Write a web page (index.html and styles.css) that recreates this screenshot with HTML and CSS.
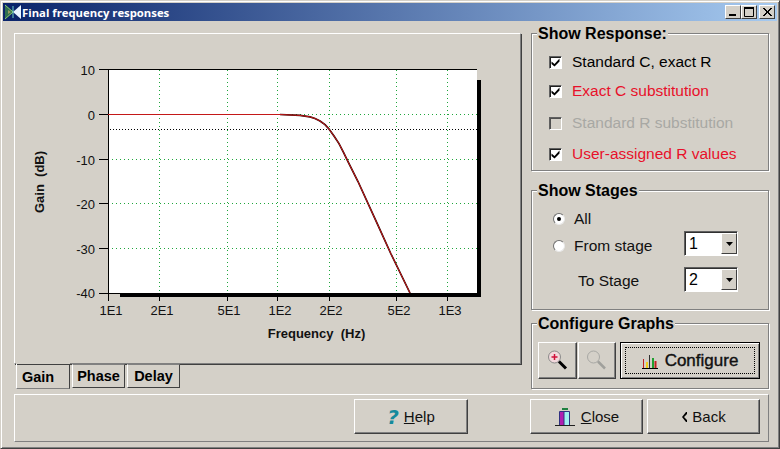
FILE: index.html
```html
<!DOCTYPE html>
<html lang="en">
<head>
<meta charset="utf-8">
<title>Final frequency responses</title>
<link rel="stylesheet" href="styles.css">
</head>
<body>
<div class="window">
  <header class="titlebar">
    <svg class="app-icon" width="18" height="16" viewBox="0 0 18 16">
      <rect width="18" height="16" fill="#0a246a"/>
      <path d="M1 1L9 8L1 15Z" fill="#2f6f4f"/>
      <path d="M17 1L9 8L17 15Z" fill="#e8f4ff"/>
      <path d="M1 1L9 8L1 15" fill="none" stroke="#8fd06a"/>
      <path d="M4 6L7 8L4 10Z" fill="#9a9a60"/>
      <path d="M9 2V14" stroke="#6fd0c8"/>
    </svg>
    <span class="title-text">Final frequency responses</span>
    <div class="caption-buttons">
      <span class="caption-btn"><svg width="14" height="12" viewBox="0 0 14 12"><rect x="3" y="8" width="7" height="2" fill="#000"/></svg></span>
      <span class="caption-btn"><svg width="14" height="12" viewBox="0 0 14 12"><path d="M3 2.500H11M2.500 2V10.500H11.500V2" fill="none" stroke="#000"/><rect x="2" y="1" width="10" height="2" fill="#000"/></svg></span>
      <span class="caption-btn caption-close"><svg width="14" height="12" viewBox="0 0 14 12"><path d="M3 2L11 10M4 2L12 10M11 2L3 10M12 2L4 10" stroke="#000" stroke-width="1"/></svg></span>
    </div>
  </header>

  <div class="client">
    <div class="upper">
      <section class="left-col">
        <div class="chart-panel">
          <svg class="chart" width="505" height="329" viewBox="15 34 505 329">
            <rect x="120" y="80" width="361" height="217" fill="#000"/>
            <rect x="108" y="70" width="369" height="223" fill="#fff"/>
            <g class="grid-green">
              <path d="M159.500 70V293M227.500 70V293M277.500 70V293M329.500 70V293M396.500 70V293M447.500 70V293"/>
              <path d="M108 114.500H477M108 159.500H477M108 203.500H477M108 248.500H477"/>
            </g>
            <path class="ref-line" d="M110 129.500H477"/>
            <path class="axis" d="M99 69.500H477M108.500 69.500V301M99 114.500H108M99 159.500H108M99 203.500H108M99 248.500H108M99 293.500H120M159.500 293V301M227.500 293V301M277.500 293V301M329.500 293V301M396.500 293V301M447.500 293V301"/>
            <path class="curve-dark" d="M280 114.500L300 115.400L310 116.900L315 118.500L320 121L325 124.600L329 129L334 136L339 143.600L343.500 152.300L348 161.700L358 181.500L377 223.200L391 254L410 293"/>
            <path class="curve-red" d="M108 114.500H280L300 115.400L310 116.900L315 118.500L320 121L325 124.600L329 129L334 136L339 143.600L343.500 152.300L348 161.700L358 181.500L377 223.200L391 254L410 293"/>
            <g class="tick-y">
              <text x="95" y="75">10</text>
              <text x="95" y="120">0</text>
              <text x="95" y="165">-10</text>
              <text x="95" y="209">-20</text>
              <text x="95" y="254">-30</text>
              <text x="95" y="298">-40</text>
            </g>
            <g class="tick-x">
              <text x="111" y="315">1E1</text>
              <text x="162" y="315">2E1</text>
              <text x="229" y="315">5E1</text>
              <text x="280" y="315">1E2</text>
              <text x="331" y="315">2E2</text>
              <text x="399" y="315">5E2</text>
              <text x="450" y="315">1E3</text>
            </g>
            <text class="axis-title" x="316.500" y="338" xml:space="preserve">Frequency  (Hz)</text>
            <text class="axis-title" transform="translate(44 182) rotate(-90)" xml:space="preserve">Gain  (dB)</text>
          </svg>
        </div>
        <nav class="tabs">
          <span class="tab tab-active">Gain</span>
          <span class="tab">Phase</span>
          <span class="tab">Delay</span>
        </nav>
      </section>

      <aside class="right-col">
        <div class="group group-response">
          <h2 class="group-title">Show Response:</h2>
          <div class="check-list">
            <div class="option"><span class="checkbox"><svg width="9" height="9" viewBox="0 0 9 9"><path d="M0.500 3.500L3.500 6L8.500 0.500V3.500L3.500 8.500L0.500 6Z" fill="#000"/></svg></span><span>Standard C, exact R</span></div>
            <div class="option text-red"><span class="checkbox"><svg width="9" height="9" viewBox="0 0 9 9"><path d="M0.500 3.500L3.500 6L8.500 0.500V3.500L3.500 8.500L0.500 6Z" fill="#000"/></svg></span><span>Exact C substitution</span></div>
            <div class="option text-disabled"><span class="checkbox checkbox-disabled"></span><span>Standard R substitution</span></div>
            <div class="option text-red"><span class="checkbox"><svg width="9" height="9" viewBox="0 0 9 9"><path d="M0.500 3.500L3.500 6L8.500 0.500V3.500L3.500 8.500L0.500 6Z" fill="#000"/></svg></span><span>User-assigned R values</span></div>
          </div>
        </div>

        <div class="group group-stages">
          <h2 class="group-title">Show Stages</h2>
          <div class="stage-grid">
            <span class="radio radio-on"></span><span class="stage-label">All</span><span></span>
            <span class="radio row-shift"></span><span class="stage-label row-shift">From stage</span>
            <span class="combo"><span class="combo-value">1</span><span class="combo-arrow"><svg width="7" height="4" viewBox="0 0 7 4"><path d="M0 0H7L3.500 4Z" fill="#000"/></svg></span></span>
            <span></span><span class="stage-label to-stage">To Stage</span>
            <span class="combo"><span class="combo-value">2</span><span class="combo-arrow"><svg width="7" height="4" viewBox="0 0 7 4"><path d="M0 0H7L3.500 4Z" fill="#000"/></svg></span></span>
          </div>
        </div>

        <div class="group group-config">
          <h2 class="group-title">Configure Graphs</h2>
          <div class="config-row">
            <button class="btn btn-icon" type="button">
              <svg width="24" height="24" viewBox="0 0 24 24"><circle cx="8.500" cy="8" r="6" fill="#f2d8dc" stroke="#8a8a8a"/><path d="M8.500 5V11M5.500 8H11.500" stroke="#d0103a" stroke-width="1.500"/><path d="M13 12.500L20 19.500" stroke="#000" stroke-width="3"/></svg>
            </button>
            <button class="btn btn-icon" type="button">
              <svg width="24" height="24" viewBox="0 0 24 24"><circle cx="8.500" cy="8" r="6" fill="none" stroke="#a8a8a4"/><path d="M13 12.500L20 19.500" stroke="#a0a09c" stroke-width="2.500"/></svg>
            </button>
            <button class="btn btn-default" type="button">
              <span class="focus-ring">
                <svg width="17" height="16" viewBox="0 0 17 16"><path d="M0 15.500H16" stroke="#000"/><path d="M1.500 6V15" stroke="#c02020"/><path d="M4 9H6V15H4Z" fill="#f0d020"/><path d="M7.500 2V15" stroke="#303030"/><path d="M10 5H12V15H10Z" fill="#20a030"/><path d="M13.500 8V15" stroke="#c02020" stroke-width="2"/></svg>
                <span>Configure</span>
              </span>
            </button>
          </div>
        </div>
      </aside>
    </div>

    <footer class="bottom-panel">
      <button class="btn btn-footer btn-help" type="button">
        <span class="help-mark">?</span><span><u>H</u>elp</span>
      </button>
      <button class="btn btn-footer btn-close" type="button">
        <svg width="22" height="22" viewBox="0 0 22 22"><path d="M1 19.500H21" stroke="#202020"/><rect x="8" y="2" width="6" height="2" fill="#208040"/><path d="M6 6H10V19H6Z" fill="#b020b0"/><path d="M10 6H15V19H10Z" fill="#a0f0f0"/><path d="M5.500 19V5.500H15.500V19M10 6V19" fill="none" stroke="#303080"/></svg>
        <span><u>C</u>lose</span>
      </button>
      <button class="btn btn-footer btn-back" type="button">
        <svg width="6" height="10" viewBox="0 0 6 10"><path d="M5 0L1 5L5 10H6V8L3 5L6 2V0Z" fill="#000"/></svg>
        <span>Back</span>
      </button>
    </footer>
  </div>
</div>
</body>
</html>
```

FILE: styles.css
```css
* { box-sizing: border-box; }

html, body {
  margin: 0;
  padding: 0;
  background: #d4d0c8;
}

body {
  width: 780px;
  height: 449px;
  overflow: hidden;
  font-family: "Liberation Sans", Arial, sans-serif;
  font-size: 15px;
  color: #000;
}

.window {
  width: 780px;
  height: 449px;
  padding: 2px;
  display: flex;
  flex-direction: column;
  background: #d4d0c8;
  border: 1px solid;
  border-color: #d4d0c8 #404040 #404040 #d4d0c8;
  box-shadow: inset 1px 1px 0 #fff, inset -1px -1px 0 #808080;
}

.titlebar {
  height: 18px;
  flex: none;
  display: flex;
  align-items: center;
  padding: 0 2px 0 1px;
  background: linear-gradient(to right, #0a246a 0%, #a6caf0 100%);
}

.app-icon { flex: none; }

.title-text {
  color: #fff;
  font-family: "Open Sans", sans-serif;
  font-weight: 700;
  font-size: 11.300px;
  flex: 1;
}

.caption-buttons { display: flex; }

.caption-btn {
  width: 16px;
  height: 14px;
  display: flex;
  background: #d4d0c8;
  border: 1px solid;
  border-color: #fff #404040 #404040 #fff;
}

.caption-close { margin-left: 2px; }

.client {
  flex: 1;
  padding: 12px 8px 0 11px;
  display: flex;
  flex-direction: column;
}

.upper { display: flex; gap: 10px; height: 356px; }

.left-col { width: 507px; flex: none; display: flex; flex-direction: column; }

.chart-panel {
  height: 331px;
  border: 1px solid;
  border-color: #fff #808080 #808080 #fff;
  box-shadow: 1px 1px 0 #404040;
}

.chart { display: block; }

.grid-green path {
  fill: none;
  stroke: #1fa63c;
  stroke-dasharray: 1 3;
  stroke-width: 1;
}

.ref-line { fill: none; stroke: #000; stroke-dasharray: 1 2; stroke-width: 1; }
.axis { fill: none; stroke: #000; stroke-width: 1; }
.curve-dark { fill: none; stroke: #200000; stroke-width: 1.700; }
.curve-red { fill: none; stroke: #c41818; stroke-width: 1; }

.tick-y text, .tick-x text {
  font-family: "Liberation Sans", sans-serif;
  font-size: 13px;
  fill: #111;
}

.tick-y text { text-anchor: end; }
.tick-x text { text-anchor: middle; }

.axis-title {
  font-family: "Liberation Sans", sans-serif;
  font-weight: 700;
  font-size: 13px;
  text-anchor: middle;
  fill: #111;
}

.tabs { display: flex; align-items: flex-start; padding-left: 2px; gap: 2px; }

.tab {
  width: 53px;
  height: 24px;
  display: flex;
  align-items: center;
  justify-content: center;
  font-family: "Liberation Sans", sans-serif;
  font-weight: 700;
  font-size: 14.500px;
  border: 1px solid;
  border-color: #808080 #404040 #404040 #fff;
}

.tab-active {
  width: 54px;
  height: 25px;
  padding: 2px 10px 0 0;
  border-color: transparent #404040 #808080 #fff;
  border-top: 0;
  box-shadow: 0 -2px 0 #d4d0c8;
}

.right-col { width: 238px; flex: none; display: flex; flex-direction: column; }

.group {
  border: 1px solid #808080;
  box-shadow: 1px 1px 0 #fff, inset 1px 1px 0 #fff;
}

.group-title {
  margin: -8px 0 0 5px;
  padding: 0 1px;
  width: fit-content;
  height: 15px;
  line-height: 15px;
  font-size: 16px;
  font-weight: 700;
  background: #d4d0c8;
}

.group-response { height: 138px; }
.group-stages { height: 120px; margin-top: 19px; }
.group-config { height: 66px; margin-top: 13px; }

.check-list {
  margin-top: 7px;
  padding-left: 17px;
  display: grid;
  grid-template-rows: 28px 30px 34px 28px;
  font-size: 15.500px;
}

.option { display: flex; align-items: center; gap: 10px; }

.text-red { color: #e8102a; }
.text-disabled { color: #a8a8a4; }

.checkbox {
  width: 13px;
  height: 13px;
  flex: none;
  display: flex;
  align-items: center;
  justify-content: center;
  background: #fff;
  border: 1px solid;
  border-color: #606060 #fff #fff #606060;
  box-shadow: inset 1px 1px 0 #202020;
}

.checkbox-disabled {
  background: #d4d0c8;
  box-shadow: inset 1px 1px 0 #505050;
}

.stage-grid {
  margin-top: 9px;
  padding-left: 21px;
  display: grid;
  grid-template-columns: 20px 111px 54px;
  grid-template-rows: 24px 25px 47px;
  align-items: center;
  font-size: 15.500px;
}

.stage-label { padding-left: 1px; color: #111; }
.row-shift { margin-top: 4px; }
.to-stage { margin: 3px 0 0 4px; }

.radio {
  width: 12px;
  height: 12px;
  border-radius: 50%;
  background: #fff;
  border: 1px solid;
  border-color: #707070 #e8e8e8 #e8e8e8 #707070;
  display: flex;
  align-items: center;
  justify-content: center;
}

.radio-on::after {
  content: "";
  width: 4px;
  height: 4px;
  border-radius: 50%;
  background: #000;
}

.combo {
  width: 54px;
  height: 25px;
  display: flex;
  background: #fff;
  border: 1px solid;
  border-color: #606060 #fff #fff #606060;
  box-shadow: inset 1px 1px 0 #303030;
}

.combo-value { flex: 1; padding: 3px 0 0 4px; font-size: 16px; line-height: 18px; }

.combo-arrow {
  width: 16px;
  height: 21px;
  margin-top: 1px;
  display: flex;
  align-items: center;
  justify-content: center;
  background: #d4d0c8;
  border: 1px solid;
  border-color: #fff #404040 #404040 #fff;
}

.config-row {
  margin-top: 11px;
  padding-left: 6px;
  display: flex;
  align-items: flex-start;
  gap: 1px;
}

.btn {
  appearance: none;
  margin: 0;
  padding: 0;
  display: flex;
  align-items: center;
  justify-content: center;
  font-family: "Liberation Sans", sans-serif;
  color: #111;
  background: #d4d0c8;
  border: 1px solid;
  border-color: #fff #404040 #404040 #fff;
  box-shadow: inset -1px -1px 0 #808080;
}

.btn-icon { width: 38px; height: 37px; }
.btn-icon:first-child { width: 39px; }

.btn-default {
  width: 140px;
  height: 37px;
  margin-left: 3px;
  border: 1px solid #000;
  box-shadow: inset 1px 1px 0 #fff, inset -1px -1px 0 #808080;
}

.focus-ring {
  width: 130px;
  height: 27px;
  display: flex;
  align-items: center;
  justify-content: center;
  gap: 6px;
  font-size: 17px;
  -webkit-text-stroke: 0.4px #111;
  border: 1px dotted #000;
}

.bottom-panel {
  height: 48px;
  margin-top: 5px;
  padding-top: 4px;
  display: flex;
  align-items: flex-start;
  justify-content: flex-end;
  border: 1px solid;
  border-color: #fff #808080 #808080 #fff;
}

.btn-footer {
  height: 35px;
  font-size: 15px;
  gap: 5px;
}

.btn-help { width: 114px; margin-right: 62px; }
.btn-close { width: 113px; margin-right: 4px; }
.btn-back { width: 113px; margin-right: 8px; }

.help-mark {
  font-family: "DejaVu Sans", sans-serif;
  font-weight: 700;
  font-style: italic;
  font-size: 20px;
  line-height: 20px;
  color: #158a9c;
}
```
